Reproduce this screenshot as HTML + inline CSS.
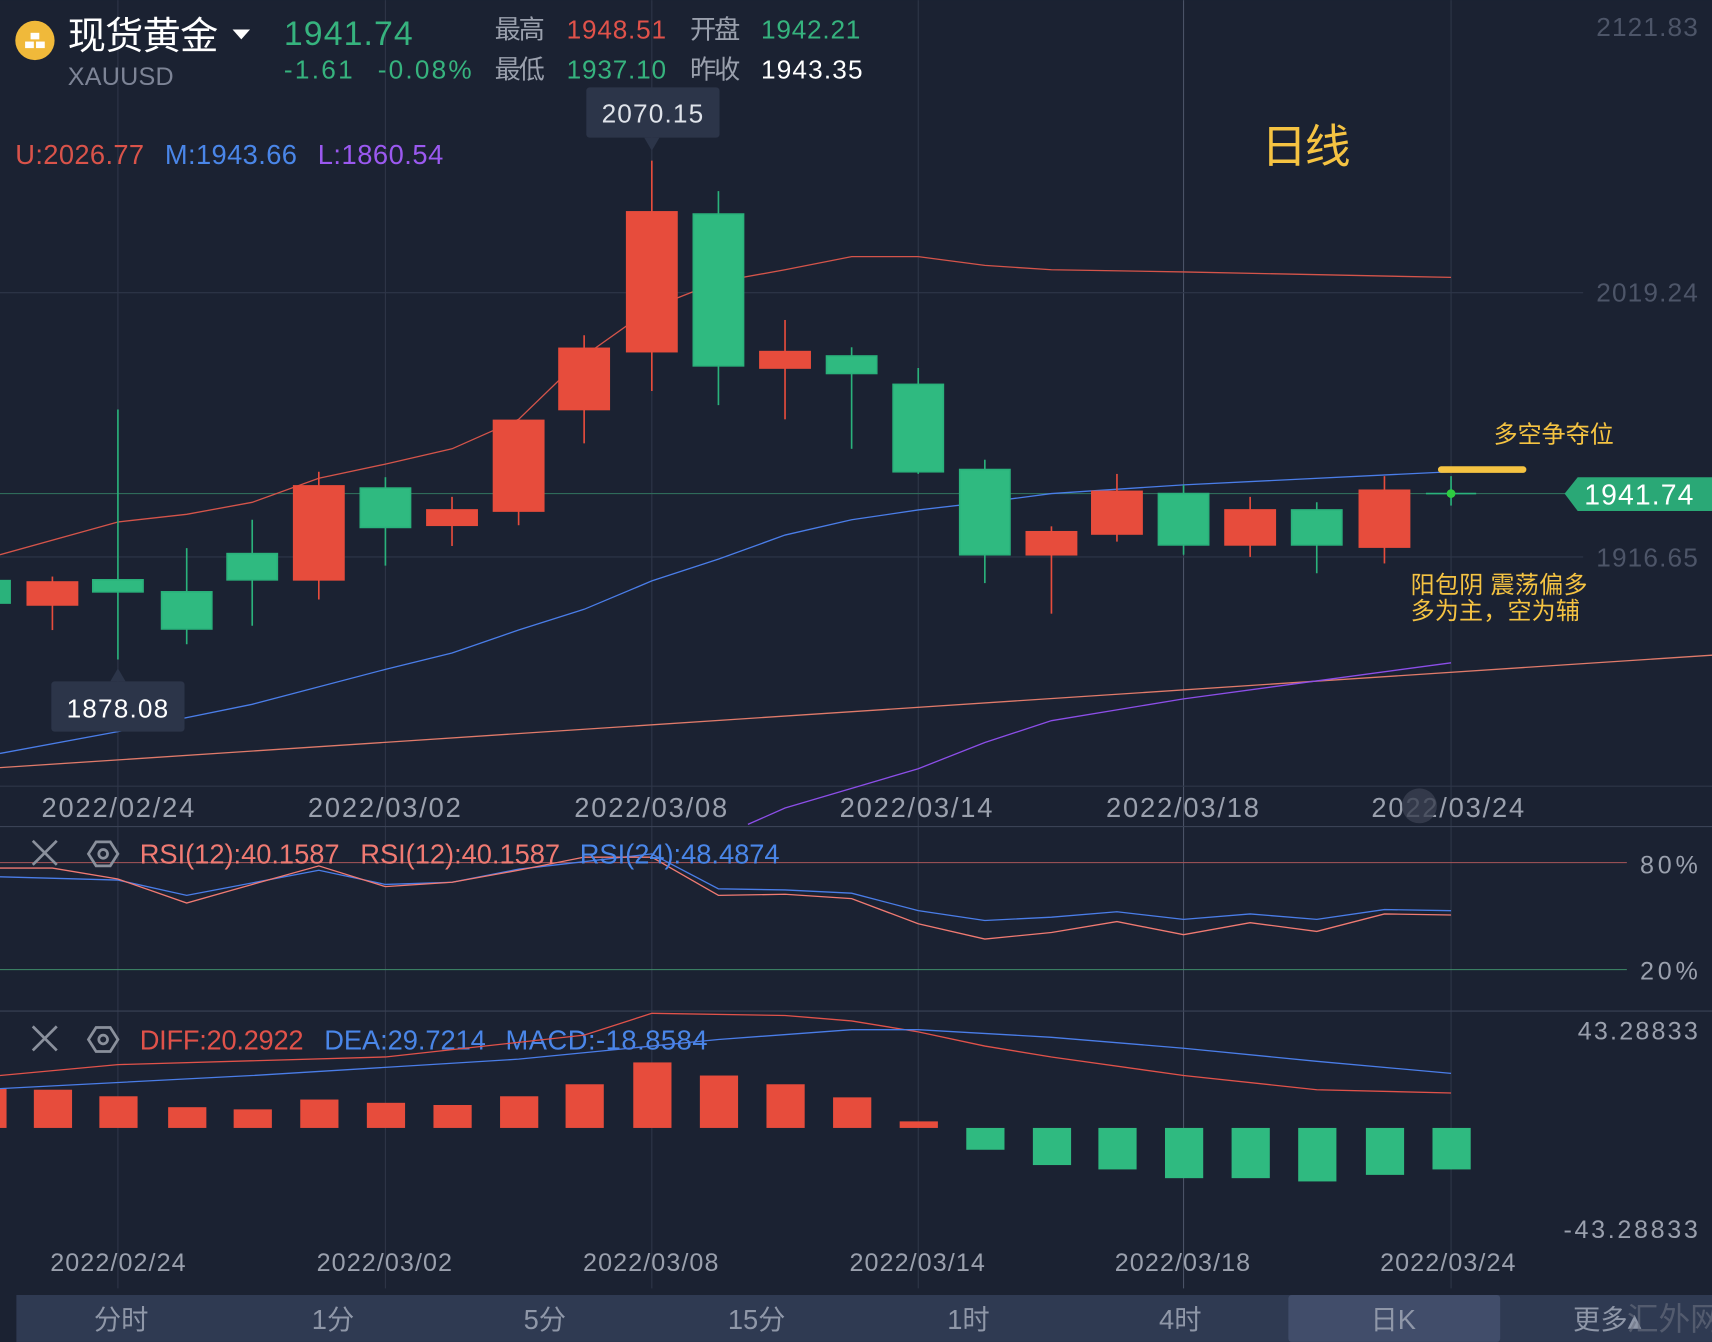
<!DOCTYPE html>
<html><head><meta charset="utf-8"><style>
html,body{margin:0;padding:0;background:#1b2232;width:1712px;height:1342px;overflow:hidden}
svg{display:block}
text{font-family:"Liberation Sans","Noto Sans CJK SC",sans-serif}
</style></head><body>
<svg width="1712" height="1342" viewBox="0 0 1568 1229" xmlns="http://www.w3.org/2000/svg">
<rect width="1568" height="1229" fill="#1b2232"/>
<g stroke="#2e3648" stroke-width="1">
<line x1="108" y1="0" x2="108" y2="1180"/><line x1="353" y1="0" x2="353" y2="1180"/>
<line x1="597" y1="0" x2="597" y2="1180"/><line x1="841" y1="0" x2="841" y2="1180"/>
<line x1="1084" y1="0" x2="1084" y2="1180" stroke="#4a5366"/><line x1="1329" y1="0" x2="1329" y2="1180"/>
<line x1="0" y1="268" x2="1450" y2="268"/><line x1="0" y1="510" x2="1450" y2="510"/>
<line x1="0" y1="720" x2="1568" y2="720"/>
</g>
<line x1="0" y1="757" x2="1568" y2="757" stroke="#3a4255"/>
<line x1="0" y1="926" x2="1568" y2="926" stroke="#3a4255"/>
<line x1="0" y1="452" x2="1440" y2="452" stroke="#2f6b5a" stroke-width="1"/>
<g fill="#4d5568" font-size="24">
<text x="1462" y="33" textLength="93">2121.83</text>
<text x="1462" y="276" textLength="93">2019.24</text>
<text x="1462" y="519" textLength="93">1916.65</text>
</g>
<polyline fill="none" stroke="#e07a6a" stroke-width="1.2" points="0,703 1568,600"/>
<polyline fill="none" stroke="#d4544a" stroke-width="1.2" points="0,508 108,478 171,471 231,460 292,438 353,425 414,411 475,384 535,326 597,282 658,258 719,247 780,235 841,235 902,243 963,247 1084,249 1329,254"/>
<polyline fill="none" stroke="#4a7de8" stroke-width="1.2" points="0,690 108,670 231,645 353,613 414,598 475,577 535,558 597,532 658,512 719,490 780,476 841,467 902,460 963,452 1084,444 1329,432"/>
<polyline fill="none" stroke="#8c4ee8" stroke-width="1.2" points="685,755 719,740 780,722 841,704 902,680 963,660 1084,640 1329,607"/>
<g stroke-width="1.5">
<rect x="0" y="531" width="10" height="22" fill="#2ab27b"/>
<g stroke="#e74c3c" fill="#e74c3c">
<line x1="48" y1="528" x2="48" y2="577"/><rect x="25" y="533" width="46" height="21"/>
<line x1="292" y1="432" x2="292" y2="549"/><rect x="269" y="445" width="46" height="86"/>
<line x1="414" y1="455" x2="414" y2="500"/><rect x="391" y="467" width="46" height="14"/>
<line x1="475" y1="385" x2="475" y2="481"/><rect x="452" y="385" width="46" height="83"/>
<line x1="535" y1="307" x2="535" y2="406"/><rect x="512" y="319" width="46" height="56"/>
<line x1="597" y1="147" x2="597" y2="358"/><rect x="574" y="194" width="46" height="128"/>
<line x1="719" y1="293" x2="719" y2="384"/><rect x="696" y="322" width="46" height="15"/>
<line x1="963" y1="482" x2="963" y2="562"/><rect x="940" y="487" width="46" height="21"/>
<line x1="1023" y1="434" x2="1023" y2="496"/><rect x="1000" y="450" width="46" height="39"/>
<line x1="1145" y1="455" x2="1145" y2="510"/><rect x="1122" y="467" width="46" height="32"/>
<line x1="1268" y1="436" x2="1268" y2="516"/><rect x="1245" y="449" width="46" height="52"/>
</g>
<g stroke="#2ab27b" fill="#2fba80">
<line x1="108" y1="375" x2="108" y2="604"/><rect x="85" y="531" width="46" height="11"/>
<line x1="171" y1="502" x2="171" y2="590"/><rect x="148" y="542" width="46" height="34"/>
<line x1="231" y1="476" x2="231" y2="573"/><rect x="208" y="507" width="46" height="24"/>
<line x1="353" y1="437" x2="353" y2="518"/><rect x="330" y="447" width="46" height="36"/>
<line x1="658" y1="175" x2="658" y2="371"/><rect x="635" y="196" width="46" height="139"/>
<line x1="780" y1="318" x2="780" y2="411"/><rect x="757" y="326" width="46" height="16"/>
<line x1="841" y1="337" x2="841" y2="434"/><rect x="818" y="352" width="46" height="80"/>
<line x1="902" y1="421" x2="902" y2="534"/><rect x="879" y="430" width="46" height="78"/>
<line x1="1084" y1="444" x2="1084" y2="508"/><rect x="1061" y="452" width="46" height="47"/>
<line x1="1206" y1="460" x2="1206" y2="525"/><rect x="1183" y="467" width="46" height="32"/>
<line x1="1329" y1="436" x2="1329" y2="463"/><line x1="1306" y1="452" x2="1352" y2="452"/>
</g>
<circle cx="1329" cy="452" r="4" fill="#2ecc40"/>
</g>
<circle cx="32" cy="37" r="18" fill="#f0b93a"/>
<g fill="#fff"><rect x="23" y="38" width="8" height="6"/><rect x="33" y="38" width="8" height="6"/><rect x="28" y="30" width="8" height="6"/></g>
<text x="62" y="45" font-size="35" fill="#fff" textLength="138">现货黄金</text>
<path d="M213 27 L229 27 L221 36 Z" fill="#fff"/>
<text x="62" y="78" font-size="23" fill="#7d8496" textLength="97">XAUUSD</text>
<text x="260" y="41" font-size="31" fill="#36b37e" textLength="118">1941.74</text>
<text x="260" y="72" font-size="24" fill="#36b37e" textLength="63">-1.61</text>
<text x="346" y="72" font-size="24" fill="#36b37e" textLength="86">-0.08%</text>
<g font-size="24">
<text x="453" y="35" fill="#9aa0ad" textLength="46">最高</text><text x="519" y="35" fill="#e0524a" textLength="91">1948.51</text>
<text x="632" y="35" fill="#9aa0ad" textLength="46">开盘</text><text x="697" y="35" fill="#36b37e" textLength="91">1942.21</text>
<text x="453" y="72" fill="#9aa0ad" textLength="46">最低</text><text x="519" y="72" fill="#36b37e" textLength="91">1937.10</text>
<text x="632" y="72" fill="#9aa0ad" textLength="46">昨收</text><text x="697" y="72" fill="#fff" textLength="93">1943.35</text>
</g>
<g font-size="25">
<text x="14" y="150" fill="#d9534a" textLength="118">U:2026.77</text>
<text x="151" y="150" fill="#4a86e8" textLength="121">M:1943.66</text>
<text x="291" y="150" fill="#9b59f0" textLength="115">L:1860.54</text>
</g>
<text x="1155" y="149" font-size="42" fill="#f5c342" textLength="82">日线</text>
<rect x="537" y="80" width="122" height="46" rx="3" fill="#2c3549"/>
<path d="M590 126 L597 138 L604 126Z" fill="#2c3549"/>
<text x="551" y="112" font-size="24" fill="#dfe3ea" textLength="93">2070.15</text>
<rect x="47" y="624" width="122" height="46" rx="3" fill="#2c3549"/>
<path d="M101 624 L108 612 L115 624Z" fill="#2c3549"/>
<text x="61" y="657" font-size="24" fill="#fff" textLength="93">1878.08</text>
<rect x="1317" y="427" width="81" height="6" rx="3" fill="#f5c342"/>
<text x="1368" y="405" font-size="22" fill="#f5c342" textLength="110">多空争夺位</text>
<text x="1292" y="543" font-size="22" fill="#f5c342" textLength="162">阳包阴 震荡偏多</text>
<text x="1292" y="567" font-size="22" fill="#f5c342" textLength="155">多为主，空为辅</text>
<path d="M1433 452 L1445 437 L1568 437 L1568 468 L1445 468 Z" fill="#2aa876"/>
<text x="1451" y="462" font-size="26" fill="#fff" textLength="100">1941.74</text>
<g font-size="25" fill="#9aa0ad">
<text x="38" y="748" textLength="140">2022/02/24</text><text x="282" y="748" textLength="140">2022/03/02</text>
<text x="526" y="748" textLength="140">2022/03/08</text><text x="769" y="748" textLength="140">2022/03/14</text>
<text x="1013" y="748" textLength="140">2022/03/18</text><text x="1256" y="748" textLength="140">2022/03/24</text>
</g>
<circle cx="1300" cy="738" r="16" fill="#3a4050" opacity="0.8"/>
<line x1="0" y1="790" x2="1490" y2="790" stroke="#a8565a" stroke-width="1"/>
<line x1="0" y1="888" x2="1490" y2="888" stroke="#3f8c6a" stroke-width="1"/>
<text x="1502" y="800" font-size="23" fill="#9aa0ad" textLength="53">80%</text>
<text x="1502" y="897" font-size="23" fill="#9aa0ad" textLength="53">20%</text>
<polyline fill="none" stroke="#4a7de8" stroke-width="1.2" points="0,803 108,806 171,820 292,797 353,810 414,808 475,796 597,782 658,814 719,815 780,818 841,834 902,843 963,840 1023,835 1084,842 1145,837 1206,842 1268,833 1329,834"/>
<polyline fill="none" stroke="#f07a72" stroke-width="1.2" points="0,795 48,795 108,805 171,827 231,810 292,793 353,812 414,808 475,797 535,785 597,785 658,820 719,819 780,823 841,846 902,860 963,854 1023,844 1084,856 1145,845 1206,853 1268,837 1329,838"/>
<g stroke="#8a909c" stroke-width="2.5" fill="none">
<path d="M30 770 L52 792 M52 770 L30 792"/>
<path d="M30 940 L52 962 M52 940 L30 962"/>
<path d="M88 771 L101 771 L108 782 L101 793 L88 793 L81 782 Z"/><circle cx="94.5" cy="782" r="4"/>
<path d="M88 941 L101 941 L108 952 L101 963 L88 963 L81 952 Z"/><circle cx="94.5" cy="952" r="4"/>
</g>
<g font-size="25">
<text x="128" y="791" fill="#f07a72" textLength="183">RSI(12):40.1587</text>
<text x="330" y="791" fill="#f07a72" textLength="183">RSI(12):40.1587</text>
<text x="531" y="791" fill="#4a86e8" textLength="183">RSI(24):48.4874</text>
<text x="128" y="961" fill="#e0524a" textLength="150">DIFF:20.2922</text>
<text x="297" y="961" fill="#4a86e8" textLength="148">DEA:29.7214</text>
<text x="463" y="961" fill="#4a86e8" textLength="185">MACD:-18.8584</text>
</g>
<text x="1445" y="952" font-size="23" fill="#9aa0ad" textLength="110">43.28833</text>
<text x="1432" y="1134" font-size="23" fill="#9aa0ad" textLength="123">-43.28833</text>
<g fill="#e74c3c">
<rect x="0" y="997" width="6" height="36"/>
<rect x="31" y="998" width="35" height="35"/><rect x="91" y="1004" width="35" height="29"/>
<rect x="154" y="1014" width="35" height="19"/><rect x="214" y="1016" width="35" height="17"/>
<rect x="275" y="1007" width="35" height="26"/><rect x="336" y="1010" width="35" height="23"/>
<rect x="397" y="1012" width="35" height="21"/><rect x="458" y="1004" width="35" height="29"/>
<rect x="518" y="993" width="35" height="40"/><rect x="580" y="973" width="35" height="60"/>
<rect x="641" y="985" width="35" height="48"/><rect x="702" y="993" width="35" height="40"/>
<rect x="763" y="1005" width="35" height="28"/><rect x="824" y="1027" width="35" height="6"/>
</g>
<g fill="#2fba80">
<rect x="885" y="1033" width="35" height="20"/><rect x="946" y="1033" width="35" height="34"/>
<rect x="1006" y="1033" width="35" height="38"/><rect x="1067" y="1033" width="35" height="46"/>
<rect x="1128" y="1033" width="35" height="46"/><rect x="1189" y="1033" width="35" height="49"/>
<rect x="1251" y="1033" width="35" height="43"/><rect x="1312" y="1033" width="35" height="38"/>
</g>
<polyline fill="none" stroke="#e0524a" stroke-width="1.2" points="0,985 108,975 353,968 535,948 597,928 719,930 780,935 841,945 902,958 963,968 1084,985 1206,998 1329,1001"/>
<polyline fill="none" stroke="#4a7de8" stroke-width="1.2" points="0,997 231,985 475,970 658,952 780,943 841,943 963,950 1084,960 1206,972 1329,983"/>
<g font-size="23" fill="#9aa0ad">
<text x="46" y="1164" textLength="124">2022/02/24</text><text x="290" y="1164" textLength="124">2022/03/02</text>
<text x="534" y="1164" textLength="124">2022/03/08</text><text x="778" y="1164" textLength="124">2022/03/14</text>
<text x="1021" y="1164" textLength="124">2022/03/18</text><text x="1264" y="1164" textLength="124">2022/03/24</text>
</g>
<rect x="15" y="1186" width="1553" height="43" fill="#2f3a52"/>
<rect x="1180" y="1186" width="194" height="43" rx="3" fill="#414d6a"/>
<g font-size="25" fill="#8f97a8" text-anchor="middle">
<text x="111" y="1217">分时</text><text x="305" y="1217">1分</text><text x="499" y="1217">5分</text>
<text x="693" y="1217">15分</text><text x="887" y="1217">1时</text><text x="1081" y="1217">4时</text>
<text x="1276" y="1217">日K</text><text x="1472" y="1217">更多▴</text>
</g>
<text x="1490" y="1218" font-size="29" fill="#6b7282" opacity="0.6">汇外网</text>
</svg>
</body></html>
